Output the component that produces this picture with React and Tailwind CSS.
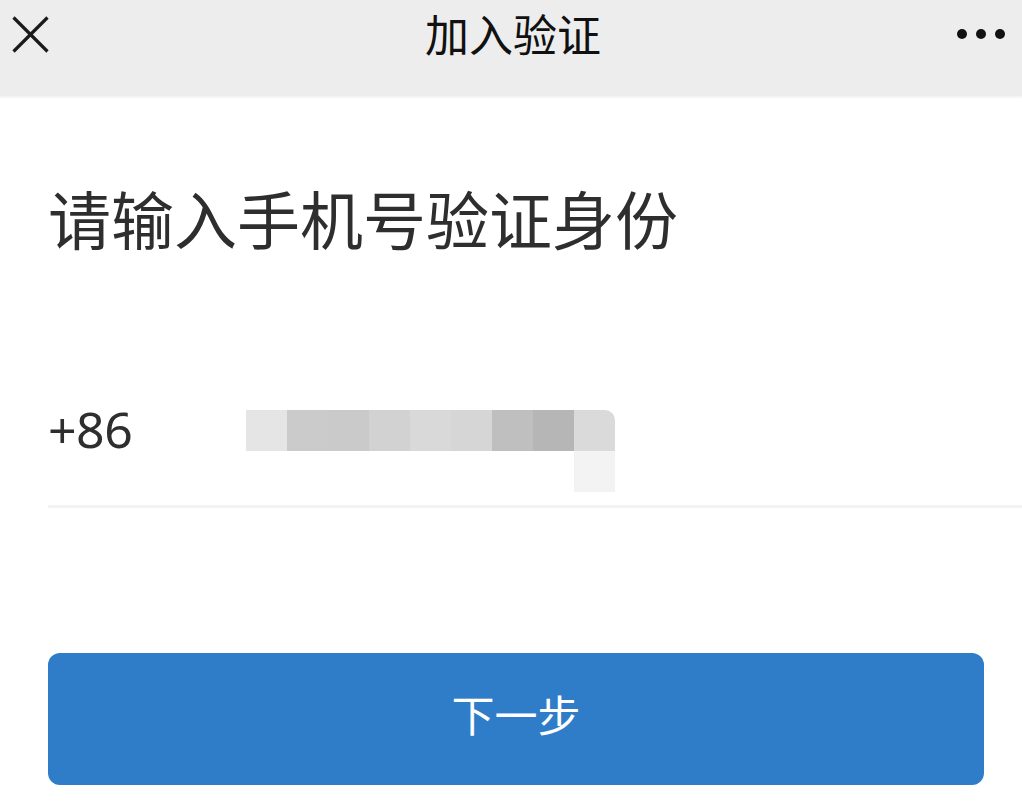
import React from 'react';

const cjk = { fontFamily: '"Noto Sans CJK SC", "Noto Sans", sans-serif' };

// mosaic cells of the blurred phone number
const cells = ['#e5e5e5', '#cbcbcb', '#cacaca', '#d2d2d2', '#d9d9d9', '#d6d6d6', '#bfbfbf', '#b6b6b6'];

export default function App() {
  return (
    <div className="w-[1022px] h-[805px] bg-white overflow-hidden" style={cjk}>
      {/* 顶部栏 */}
      <header className="h-[96px] bg-[#ededed]">
        <div className="h-[66px] grid grid-cols-[1fr_auto_1fr] items-center">
          <div className="pl-[12px] pt-[2px] flex items-center">
            <svg width="37" height="37" viewBox="0 0 37 37" fill="none" stroke="#1a1a1a" strokeWidth="3.2" strokeLinecap="butt">
              <line x1="1.5" y1="1.5" x2="35.5" y2="35.5" />
              <line x1="35.5" y1="1.5" x2="1.5" y2="35.5" />
            </svg>
          </div>
          <h1 className="text-[44px] leading-none text-[#111111] font-normal pl-[4px]">加入验证</h1>
          <div className="flex justify-end items-center gap-[9px] pr-[17px] pt-[2px]">
            <span className="w-[10px] h-[10px] rounded-full bg-[#111111]"></span>
            <span className="w-[10px] h-[10px] rounded-full bg-[#111111]"></span>
            <span className="w-[10px] h-[10px] rounded-full bg-[#111111]"></span>
          </div>
        </div>
      </header>
      <div className="h-[3px] bg-gradient-to-b from-[#f1f1f1] to-white"></div>

      {/* 主内容 */}
      <main className="pl-[48px]">
        <h2 className="mt-[86px] text-[63px] leading-none text-[#2e2e2e] font-normal">请输入手机号验证身份</h2>

        <div className="mt-[156px] flex items-start border-b-[3px] border-[#f3f3f3] pb-[13px]">
          <span
            className="w-[198px] text-[50px] leading-none text-[#2e2e2e] tracking-[-0.5px]"
            style={{ fontFamily: '"Noto Sans", sans-serif' }}
          >
            +86
          </span>
          <div className="mt-[6px] flex flex-col">
            <div className="flex h-[41px]">
              {cells.map((c, i) => (
                <div key={i} className="w-[41px] h-full" style={{ background: c }}></div>
              ))}
              <div className="w-[41px] h-full bg-[#dadada] rounded-tr-[10px]"></div>
            </div>
            <div className="flex h-[41px] justify-end">
              <div className="w-[41px] h-full bg-[#f3f3f3]"></div>
            </div>
          </div>
        </div>

        <button className="mt-[145px] w-[936px] h-[132px] rounded-[12px] bg-[#2f7dc9] text-white text-[43px] leading-none flex items-center justify-center pb-[12px]">
          下一步
        </button>
      </main>
    </div>
  );
}
